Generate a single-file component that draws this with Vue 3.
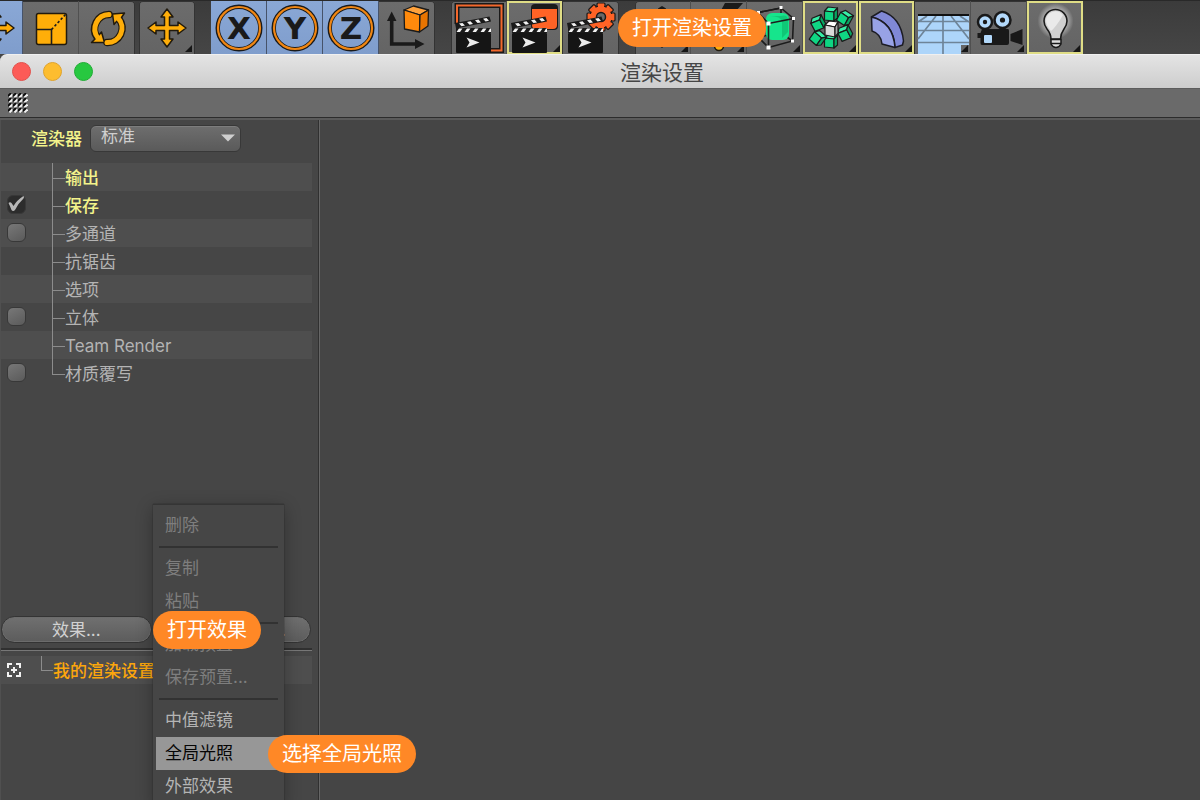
<script setup>
import { ref } from 'vue'

const groups = [
  { name: 'transform', tools: [
    { id: 'move', label: '移动', active: true },
    { id: 'scale', label: '缩放' },
    { id: 'rotate', label: '旋转' }
  ] },
  { name: 'last', tools: [{ id: 'move', label: '上次工具', more: true }] },
  { name: 'axes', tools: [
    { id: 'axis', letter: 'X', label: 'X 轴', active: true },
    { id: 'axis', letter: 'Y', label: 'Y 轴', active: true },
    { id: 'axis', letter: 'Z', label: 'Z 轴', active: true },
    { id: 'coords', label: '坐标系统' }
  ] },
  { name: 'render', tools: [
    { id: 'view', label: '渲染活动视图' },
    { id: 'picture', label: '渲染到图片查看器', framed: true, more: true },
    { id: 'settings', label: '编辑渲染设置' }
  ] },
  { name: 'objects', tools: [
    { id: 'cube', label: '立方体', more: true },
    { id: 'pen', label: '画笔', more: true },
    { id: 'cage', label: '细分曲面', more: true },
    { id: 'array', label: '阵列', framed: true, more: true },
    { id: 'bend', label: '扭曲', framed: true, more: true },
    { id: 'floor', label: '地面', more: true },
    { id: 'camera', label: '摄像机', more: true },
    { id: 'light', label: '灯光', framed: true, more: true }
  ] }
]

const rows = ref([
  { label: '输出', changed: true },
  { label: '保存', changed: true, check: true, on: true },
  { label: '多通道', check: true, on: false },
  { label: '抗锯齿' },
  { label: '选项' },
  { label: '立体', check: true, on: false },
  { label: 'Team Render' },
  { label: '材质覆写', check: true, on: false }
])

const menu = [
  [{ label: '删除', off: true }],
  [{ label: '复制', off: true }, { label: '粘贴', off: true }],
  [{ label: '加载预置', off: true }, { label: '保存预置...', off: true }],
  [{ label: '中值滤镜' }, { label: '全局光照', current: true }, { label: '外部效果' }]
]

const arrayCubes = [
  [28, 14, 0], [42, 18, 28], [42, 33, -28], [28, 41, 0], [15, 38, 35], [15, 23, -28]
]
const teeth = [0, 45, 90, 135, 180, 225, 270, 315]
</script>

<template>
  <div class="app">
    <header class="toolbar">
      <div v-for="g in groups" :key="g.name" class="group" :class="g.name">
        <button
          v-for="(t, i) in g.tools" :key="i" type="button" class="tool"
          :class="{ active: t.active, framed: t.framed }" :aria-label="t.label"
        >
          <svg viewBox="0 1 56 53" aria-hidden="true">
            <g v-if="t.id === 'move'" class="gold">
              <path d="M28 9L34 17H30.5V25.5H39V22L47 28L39 34V30.5H30.5V39H34L28 47L22 39H25.5V30.5H17V34L9 28L17 22V25.5H25.5V17H22Z" />
            </g>
            <g v-else-if="t.id === 'scale'">
              <rect x="13.5" y="13.5" width="30" height="31" rx="2" class="gold" />
              <path d="M13.5 29.5H28.5V44.5" class="line" />
              <path d="M28.5 29.5L43 14" class="line" stroke-dasharray="2.5 2" />
            </g>
            <g v-else-if="t.id === 'rotate'">
              <path d="M30 14.5A14.5 14.5 0 0 0 18 37" class="arc-edge" />
              <path d="M28 42.500A14.500 14.500 0 0 0 40 19" class="arc-edge" />
              <path d="M12.500 42.500H25.500L22.500 32L20 35L15.500 39.500Z" class="gold" />
              <path d="M45.500 13L33.500 14L35 24.500L38 21L42.500 17.500Z" class="gold" />
              <path d="M30 14.500A14.500 14.500 0 0 0 19 38" class="arc" />
              <path d="M28 42.500A14.500 14.500 0 0 0 39 18" class="arc" />
            </g>
            <g v-else-if="t.id === 'axis'">
              <circle cx="28" cy="28" r="21.300" fill="none" stroke="#1a1a1a" stroke-width="4.400" />
              <circle cx="28" cy="28" r="21" fill="none" stroke="#f08613" stroke-width="2.200" />
              <text x="28" y="39" text-anchor="middle" class="letter">{{ t.letter }}</text>
            </g>
            <g v-else-if="t.id === 'coords'">
              <path d="M12.700 19V44H38" fill="none" stroke="#1a1a1a" stroke-width="3.600" />
              <path d="M12.700 11.500L17.500 21H8ZM45.500 44L36 39V49Z" fill="#1a1a1a" />
              <g stroke="#1a1a1a" stroke-width="1.300" stroke-linejoin="round">
                <path d="M25 10L34.500 6L49.500 10L41 15Z" fill="#ffa23c" />
                <path d="M25 10L41 15L40.500 32L25.500 29Z" fill="#ff8a0c" />
                <path d="M41 15L49.500 10L49 26L40.500 32Z" fill="#e87400" />
              </g>
            </g>
            <g v-else-if="['view', 'picture', 'settings'].includes(t.id)">
              <g v-if="t.id === 'view'" fill="none">
                <path d="M6 24V5.500H50.500V50.500H39" stroke="#1a1a1a" stroke-width="5" />
                <path d="M6 24V5.500H50.500V50.500H39" stroke="#f4682c" stroke-width="2" />
              </g>
              <g v-else-if="t.id === 'picture'">
                <rect x="24" y="4" width="27" height="26" rx="4" fill="#1a1a1a" />
                <path d="M25 9H50V25Q50 29 46 29H29Q25 29 25 25Z" fill="#ff6326" />
              </g>
              <g v-else>
                <g fill="#ff6326" stroke="#1a1a1a" stroke-width="1.200">
                  <rect v-for="a in teeth" :key="a" x="34" y="3" width="8" height="8" rx="1" :transform="`rotate(${a} 38 17)`" />
                  <circle cx="38" cy="17" r="11" />
                </g>
                <circle cx="38" cy="17" r="10.400" fill="#ff6326" />
                <path v-for="a in teeth" :key="a" d="M35 5H41V10H35Z" fill="#ff6326" :transform="`rotate(${a} 38 17)`" />
                <circle cx="38" cy="17" r="4.500" fill="#686868" stroke="#1a1a1a" stroke-width="1.500" />
              </g>
              <path d="M4 23L38.500 16.500L40 21.500L5 28.500Z" fill="#1a1a1a" />
              <path d="M8 23.500L11.500 23L14 25.500L10.500 26.200ZM16 22L19.500 21.300L22 24L18.500 24.700ZM24 20.300L27.500 19.600L30 22.400L26.500 23ZM32 18.700L35.500 18L38 20.700L34.500 21.400Z" fill="#f2f2f2" />
              <path d="M5 28H40V33H5Z" fill="#1a1a1a" />
              <path d="M8 28.500H11.500L9 32H5.500ZM16 28.500H19.500L17 32H13.500ZM24 28.500H27.500L25 32H21.500ZM32 28.500H35.500L33 32H29.500ZM39 28.500H40V32H37Z" fill="#f2f2f2" />
              <rect x="5" y="33" width="35" height="20" rx="1" fill="#151515" />
              <path d="M15.500 37.500L28.500 42.500L15.500 47.500L18.500 42.500Z" fill="#ececec" />
            </g>
            <g v-else-if="t.id === 'cube'">
              <path d="M27 6L31 8.500V45L27 48L23 45V8.500Z" fill="#1a1a1a" />
            </g>
            <g v-else-if="t.id === 'pen'">
              <path d="M34 3H52L45 11L28 14Z" fill="#1a1a1a" />
              <circle cx="28" cy="46" r="4.500" class="gold" />
            </g>
            <g v-else-if="t.id === 'cage'">
              <path d="M11 12.500L34 8V33M34 33L11 37M34 33L45.500 41" class="line" />
              <rect x="19" y="13" width="23" height="27" rx="6" fill="#16e58c" />
              <path d="M23 16H34Q41 14 41 21V32L35 38V22Q34 16 23 16Z" fill="#10c877" />
              <path d="M11 12.500L34 8L46.500 18.500L21.500 23.500ZM21.500 23.500V47.500L45.500 41L46.500 18.500M21.500 47.500L11 37V12.500" class="line" />
              <path d="M10 11h3v3h-3zM32.500 6h3v3h-3zM45 17h3v3h-3zM19.500 21.500h4v4h-4zM44 39.500h3v3h-3zM19.500 45.500h4v4h-4z" fill="#fff" />
            </g>
            <g v-else-if="t.id === 'array'" stroke="#1a1a1a" stroke-width="1.200" stroke-linejoin="round">
              <g v-for="(c, k) in arrayCubes" :key="k" :transform="`translate(${c[0]} ${c[1]}) rotate(${c[2]})`">
                <path d="M-6.500 -3L-3 -7L6.500 -6L3 -2Z" fill="#38eda6" />
                <path d="M-6.500 -3L3 -2V7L-6.500 6Z" fill="#0fd683" />
                <path d="M3 -2L6.500 -6V4L3 7Z" fill="#08a663" />
              </g>
              <path d="M22 25L26 21L35 22L32 27Z" fill="#fff" />
              <path d="M22 25L32 27V37L22 35Z" fill="#d9d9d9" />
              <path d="M32 27L35 22V33L32 37Z" fill="#aaa" />
            </g>
            <g v-else-if="t.id === 'bend'" stroke="#1c1c24" stroke-width="1.500" stroke-linejoin="round">
              <path d="M12.500 17L22.500 11Q42 17 44.500 41L43.500 45L36 47.500Q35 23 12.500 17Z" fill="#8088d6" />
              <path d="M12.500 17Q34 22 36 47.500L23 44Q22 34 13 31Z" fill="#98a2e6" />
            </g>
            <g v-else-if="t.id === 'floor'">
              <rect x="3" y="15" width="51" height="39" fill="#add5fa" />
              <path d="M3 21.500H54M3 30.500H54M3 42.500H54M28 15V54M21 16L3 39M36 16L54 39M12 16L3 22M45 16L54 22" fill="none" stroke="#6e8498" stroke-width="1.700" />
              <path d="M3 15H54" stroke="#111" stroke-width="2" />
              <rect x="46" y="45" width="8" height="9" fill="#666" />
            </g>
            <g v-else-if="t.id === 'camera'">
              <g fill="#b3d9fb" stroke="#191919" stroke-width="2.500">
                <circle cx="14" cy="22" r="7" />
                <circle cx="31.500" cy="20" r="8" />
              </g>
              <circle cx="14" cy="22" r="2.200" fill="#191919" />
              <circle cx="31.500" cy="20" r="2.600" fill="#191919" />
              <path d="M11 29H37Q38 29 38 31V43Q38 45 36 45H11Q9.500 45 9.500 43V38H6.500V33H9.500ZM39.500 34L51.500 29V45L39.500 41Z" fill="#191919" />
              <rect x="13" y="35" width="8" height="8" rx="1" fill="#b3d9fb" />
            </g>
            <g v-else-if="t.id === 'light'">
              <defs>
                <radialGradient id="glow">
                  <stop offset=".55" stop-color="#fff" stop-opacity=".55" />
                  <stop offset="1" stop-color="#fff" stop-opacity="0" />
                </radialGradient>
              </defs>
              <circle cx="28.500" cy="21" r="18" fill="url(#glow)" />
              <path d="M24 39Q24 34 20 29Q17 25 17 21A11.500 11.500 0 0 1 40 21Q40 25 37 29Q33.500 34 33.500 39Z" fill="#d0d0d0" stroke="#1a1a1a" stroke-width="1.600" />
              <path d="M19 20A9.500 9.500 0 0 1 36 15Q29 27 24 31Q19 25 19 20Z" fill="#eaeaea" />
              <path d="M24 39.500H34V44Q32 47.500 29 47.500Q26 47.500 24 44Z" fill="#ddd" stroke="#1a1a1a" stroke-width="1.500" />
              <path d="M24 43.500H34" stroke="#1a1a1a" stroke-width="1.500" />
            </g>
            <path v-if="t.more" d="M53 45V52H46Z" fill="#161616" />
          </svg>
        </button>
      </div>
    </header>

    <section class="window">
      <div class="titlebar">
        <div class="lights">
          <button type="button" class="light close" aria-label="关闭"></button>
          <button type="button" class="light minimise" aria-label="最小化"></button>
          <button type="button" class="light zoom" aria-label="缩放窗口"></button>
        </div>
        <h1>渲染设置</h1>
      </div>
      <div class="gripbar">
        <svg class="grip" viewBox="0 0 20 20" aria-hidden="true">
          <template v-for="y in 4" :key="y">
            <g v-for="x in 4" :key="x" :transform="`translate(${x * 5 - 5} ${y * 5 - 5})`" fill="none" stroke-width="1.800">
              <path d="M0 3L3 0" stroke="#0c0c0c" />
              <path d="M1.500 4.500L4.500 1.500" stroke="#f4f4f4" />
            </g>
          </template>
        </svg>
      </div>

      <div class="body">
        <aside class="side">
          <div class="top">
            <div class="renderer">
              <label for="renderer">渲染器</label>
              <div class="select">
                <select id="renderer"><option>标准</option></select>
                <svg viewBox="0 0 14 8" aria-hidden="true"><path d="M0 0.500H14L7 7.500Z" fill="#cfcfcf" /></svg>
              </div>
            </div>
            <ul class="tree">
              <li v-for="(r, i) in rows" :key="r.label" :class="{ changed: r.changed }">
                <span class="tick">
                  <input v-if="r.check" :id="`row${i}`" v-model="r.on" type="checkbox">
                  <svg v-if="r.on" viewBox="0 0 20 20" aria-hidden="true"><path d="M2.500 9Q4 7.500 5.500 9L7.500 12Q11 6 17.500 2Q18.500 3 17.500 4.500Q12 9.500 9 16Q7 18 5.500 16Q4 12 2.500 9Z" fill="#b8b8b8" /></svg>
                </span>
                <span class="branch"></span>
                <label v-if="r.check" class="name" :for="`row${i}`">{{ r.label }}</label>
                <span v-else class="name">{{ r.label }}</span>
              </li>
            </ul>
            <div class="actions">
              <button type="button">效果...</button>
              <button type="button">多通道渲染...</button>
            </div>
          </div>
          <div class="presets">
            <div class="preset">
              <svg viewBox="0 0 14 14" aria-hidden="true">
                <path d="M1 5V1H5M9 1H13V5M13 9V13H9M5 13H1V9M7 4V10M4 7H10" fill="none" stroke="#f2f2f2" stroke-width="2" />
              </svg>
              <span class="elbow"></span>
              <span class="name">我的渲染设置</span>
            </div>
          </div>
        </aside>
        <main class="content"></main>
      </div>
    </section>

    <nav class="menu" aria-label="效果">
      <template v-for="(s, i) in menu" :key="i">
        <hr v-if="i">
        <button v-for="m in s" :key="m.label" type="button" :class="{ current: m.current }" :disabled="m.off">{{ m.label }}</button>
      </template>
    </nav>

    <div class="note note-settings">打开渲染设置</div>
    <div class="note note-effects">打开效果</div>
    <div class="note note-gi">选择全局光照</div>
  </div>
</template>

<style>
html, body { margin: 0; background: #464646; }
</style>

<style scoped>
.app {
  position: relative;
  display: flex;
  flex-direction: column;
  height: 100vh;
  overflow: hidden;
  background: #434343;
  color: #b4b4b4;
  font: 17px/28px "Inter", "Noto Sans CJK SC", sans-serif;
}
* { box-sizing: border-box; }
button, select, input { font: inherit; color: inherit; margin: 0; padding: 0; border: 0; background: none; }

.toolbar {
  display: flex;
  gap: 16px;
  flex: none;
  height: 60px;
  padding-top: 1px;
  background: linear-gradient(#3b3b3b, #474747);
  box-shadow: inset 0 1px #292929;
}
.group {
  display: flex;
  flex: none;
  height: 53px;
  background: linear-gradient(#6c6c6c, #646464);
  border-radius: 4px 4px 0 0;
  box-shadow: inset 0 1px #333, inset 1px 0 #333, inset -1px 0 #333;
}
.transform { margin-left: -33px; margin-right: -12px; }
.tool { display: block; width: 56px; height: 53px; border-right: 1px solid #505050; }
.tool:last-child { border-right: 0; }
.tool svg { display: block; width: 56px; height: 53px; }
.tool.active { background: linear-gradient(#8aa8d6, #7f9dcc); border-right-color: #46536a; }
.tool.framed { box-shadow: inset 0 0 0 2px #dfdd86; border-right-color: #333; }
.gold { fill: #ffae09; stroke: #211a0d; stroke-width: 1.5; stroke-linejoin: round; }
.line { fill: none; stroke: #1c1c1c; stroke-width: 1.6; }
.arc-edge { fill: none; stroke: #211a0d; stroke-width: 7.5; stroke-linecap: round; }
.arc { fill: none; stroke: #ffae09; stroke-width: 5; stroke-linecap: round; }
.letter { font: bold 31px "DejaVu Sans", sans-serif; fill: #1a1a1a; }

.window { display: flex; flex-direction: column; flex: 1; min-height: 0; margin-top: -6px; }
.titlebar {
  position: relative;
  display: flex;
  align-items: center;
  justify-content: center;
  flex: none;
  height: 34px;
  padding: 2px 0 0 124px;
  background: linear-gradient(#e4e4e4, #cdcdcd);
  border-top: 1px solid #f0f0f0;
  border-radius: 7px 0 0 0;
}
.lights { position: absolute; left: 12px; top: 7px; display: flex; gap: 12px; }
.light { width: 19px; height: 19px; border-radius: 50%; }
.close { background: #fc5b57; border: 1px solid #e2504b; }
.minimise { background: #fdbd2f; border: 1px solid #e0a32b; }
.zoom { background: #27c840; border: 1px solid #20ad34; }
h1 { margin: 0; color: #464646; font-size: 21px; font-weight: 400; line-height: 28px; }
.gripbar {
  flex: none;
  height: 32px;
  padding: 4px 8px;
  background: #6a6a6a;
  border-top: 1px solid #5d5d5d;
  border-bottom: 2px solid #5a5a5a;
  box-shadow: inset 0 -1px #2c2c2c;
}
.grip { display: block; width: 20px; height: 20px; }

.body { display: flex; flex: 1; min-height: 0; }
.side {
  display: flex;
  flex-direction: column;
  flex: none;
  width: 320px;
  padding-right: 7px;
  background: #464646;
  border-left: 1px solid #505050;
  border-right: 1px solid #666;
  box-shadow: inset -1px 0 #303030;
}
.content { flex: 1; background: #454545; }
.top { display: flex; flex-direction: column; flex: 1; }
.renderer { display: flex; align-items: center; gap: 8px; height: 43px; padding: 0 0 6px 30px; }
.renderer label { color: #f3f38b; font-weight: 500; }
.select { position: relative; width: 151px; }
.select select {
  display: block;
  appearance: none;
  width: 100%;
  height: 27px;
  padding: 0 30px 4px 10px;
  line-height: 21px;
  color: #cfcfcf;
  background: linear-gradient(#6e6e6e, #5a5a5a);
  border: 1px solid #383838;
  border-radius: 6px;
  box-shadow: inset 0 1px #7d7d7d;
}
.select svg { position: absolute; right: 6px; top: 9px; width: 14px; height: 8px; pointer-events: none; }

.tree { flex: 1; margin: 0; padding: 0; list-style: none; }
.tree li { display: flex; align-items: center; height: 28px; }
.tree li:nth-child(odd), .preset { background: #4e4e4e; }
.tree .changed { color: #f3f38b; font-weight: 500; }
.name { padding-top: 2px; }
.tick { position: relative; width: 51px; height: 28px; padding: 4px 0 0 6px; }
.tick input {
  display: block;
  appearance: none;
  width: 19px;
  height: 19px;
  border: 1px solid #383838;
  border-radius: 6px;
  background: linear-gradient(150deg, #787878, #5a5a5a);
}
.tick input:checked { background: #2c2c2c; }
.tick svg { position: absolute; left: 5px; top: 3px; width: 20px; height: 20px; pointer-events: none; }
.branch {
  width: 13px;
  height: 28px;
  border-left: 1px solid #8c8c8c;
  background: linear-gradient(#8c8c8c, #8c8c8c) 0 15px / 12px 1px no-repeat;
}
.tree li:last-child .branch { height: 16px; align-self: flex-start; }

.actions { display: flex; gap: 9px; padding: 0 1px 7px 0; }
.actions button {
  flex: 1;
  height: 27px;
  line-height: 24px;
  white-space: nowrap;
  color: #d2d2d2;
  background: linear-gradient(#707070, #5c5c5c);
  border: 1px solid #343434;
  border-radius: 14px;
  box-shadow: inset 0 0 0 1px #6c6c6c;
}
.presets { flex: none; height: 150px; padding-top: 5px; border-top: 1px solid #777; box-shadow: 0 -2px #303030; }
.preset { display: flex; align-items: center; height: 28px; padding-left: 6px; color: #fca60c; font-weight: 500; }
.preset svg { width: 14px; height: 14px; margin-right: 20px; }
.elbow { width: 12px; height: 15px; align-self: flex-start; border: solid #8c8c8c; border-width: 0 0 1px 1px; }

.menu {
  position: absolute;
  left: 153px;
  top: 504px;
  display: flex;
  flex-direction: column;
  width: 131px;
  padding: 4px 0 4px 3px;
  background: #464646;
  border-top: 1px solid #353535;
  box-shadow: 0 4px 16px rgba(0, 0, 0, .3), 0 0 1px #222;
}
.menu button { height: 33px; padding: 0 0 1px 9px; line-height: 32px; text-align: left; white-space: nowrap; color: #b4b4b4; }
.menu button:disabled { color: #7e7e7e; }
.menu .current { color: #050505; background: #979797; }
.menu hr { width: 119px; margin: 4px 3px; border: 0; height: 2px; background: #323232; }

.note {
  position: absolute;
  height: 38px;
  padding: 0 14px;
  border-radius: 19px;
  background: #ff8826;
  color: #fff;
  font-size: 20px;
  line-height: 39px;
  white-space: nowrap;
}
.note-settings { left: 618px; top: 9px; }
.note-effects { left: 153px; top: 611px; }
.note-gi { left: 268px; top: 735px; }
</style>
